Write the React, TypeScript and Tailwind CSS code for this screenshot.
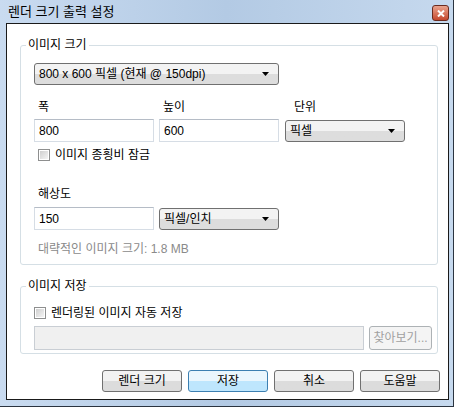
import React from "react";

const font = "font-['Liberation_Sans','Noto_Sans_CJK_KR',sans-serif]";

const Arrow = () => (
  <svg width="7" height="4" viewBox="0 0 7 4" className="shrink-0">
    <path d="M0 0h7L3.5 4z" fill="#000" />
  </svg>
);

const Combo = ({ label, w }: { label: string; w: string }) => (
  <div
    className={`${w} h-[22px] flex items-center justify-between pl-[4px] pr-[9px] rounded-[3px] border border-[#707070] bg-gradient-to-b from-[#f3f3f3] from-50% to-[#dddddd] to-50% text-[12px] text-black`}
  >
    <span>{label}</span>
    <Arrow />
  </div>
);

const Field = ({ value, w }: { value: string; w: string }) => (
  <div
    className={`${w} h-[23px] flex items-center px-[4px] border border-[#d6dde5] border-t-[#b5bcc6] bg-white text-[12px] text-black`}
  >
    {value}
  </div>
);

const Check = ({ label }: { label: string }) => (
  <div className="flex items-center gap-[5px] h-[14px] text-[12px] text-black">
    <div className="w-[12px] h-[12px] border border-[#8e8f8f] bg-white p-[1px]">
      <div className="w-full h-full bg-gradient-to-br from-[#cfcfcf] to-[#f4f4f4]" />
    </div>
    <span>{label}</span>
  </div>
);

const Group = ({ title, children, className }: { title: string; children: React.ReactNode; className?: string }) => (
  <div className={`relative border border-[#d5dfe5] rounded-[3px] ${className ?? ""}`}>
    <span className="absolute -top-[9px] left-[5px] bg-white px-[2px] text-[12px] leading-[16px] text-black">
      {title}
    </span>
    {children}
  </div>
);

const Btn = ({ label, primary }: { label: string; primary?: boolean }) => (
  <div
    className={
      primary
        ? "w-[80px] h-[22px] flex items-center justify-center rounded-[3px] border border-[#3c7fb1] bg-gradient-to-b from-[#eaf6fd] from-50% to-[#bee6fd] to-50% text-[12px] text-black"
        : "w-[80px] h-[22px] flex items-center justify-center rounded-[3px] border border-[#707070] bg-gradient-to-b from-[#f2f2f2] from-50% to-[#dcdcdc] to-50% text-[12px] text-black"
    }
  >
    {label}
  </div>
);

export default function App() {
  return (
    <div className={`w-[456px] h-[408px] bg-white overflow-hidden ${font}`}>
      <div className="w-[454px] h-[407px] flex flex-col border-r border-b border-[#2b3440] bg-gradient-to-r from-[#c9dbf0] via-[#b3cae4] to-[#c6d9ee]">
        <div className="h-[23px] flex items-center justify-between pl-[8px] pr-[4px]">
          <span className="text-[13px] text-black">렌더 크기 출력 설정</span>
          <div className="w-[17px] h-[16px] mt-[3px] flex items-center justify-center rounded-[3px] border border-[#6b2b1f] bg-gradient-to-b from-[#e9a38d] to-[#c4462c]">
            <svg width="8" height="7" viewBox="0 0 8 7">
              <path d="M1 0.5L7 6.5M7 0.5L1 6.5" stroke="#fff" strokeWidth="2" />
            </svg>
          </div>
        </div>
        <div className="ml-[6px] mr-[4px] h-[377px] border border-[#1a1a1a] bg-white pl-[13px] pr-[10px] pt-[21px] flex flex-col">
          <Group title="이미지 크기" className="pl-[13px] pt-[17px] pb-[7px]">
            <Combo label="800 x 600 픽셀 (현재 @ 150dpi)" w="w-[245px]" />
            <div className="flex gap-[5px] mt-[14px] h-[16px] text-[12px] leading-[16px] text-black">
              <span className="w-[120px] pl-[4px]">폭</span>
              <span className="w-[126px] pl-[4px]">높이</span>
              <span className="w-[120px] pl-[4px]">단위</span>
            </div>
            <div className="flex gap-[5px] mt-[4px] items-center">
              <Field value="800" w="w-[120px]" />
              <Field value="600" w="w-[120px]" />
              <div className="ml-[1px]">
                <Combo label="픽셀" w="w-[120px]" />
              </div>
            </div>
            <div className="mt-[6px] pl-[4px]">
              <Check label="이미지 종횡비 잠금" />
            </div>
            <div className="mt-[24px] h-[16px] pl-[4px] text-[12px] leading-[16px] text-black">해상도</div>
            <div className="flex gap-[5px] mt-[5px] items-center">
              <Field value="150" w="w-[120px]" />
              <Combo label="픽셀/인치" w="w-[120px]" />
            </div>
            <div className="mt-[11px] h-[16px] pl-[4px] text-[12px] leading-[16px] text-[#8a8a8a]">
              대략적인 이미지 크기: 1.8 MB
            </div>
          </Group>
          <Group title="이미지 저장" className="mt-[21px] pl-[13px] pt-[19px] pb-[3px]">
            <Check label="렌더링된 이미지 자동 저장" />
            <div className="flex gap-[5px] mt-[6px]">
              <div className="w-[330px] h-[24px] border border-[#c9ced4] bg-[#f0f0f0]" />
              <div className="w-[63px] h-[24px] flex items-center justify-center rounded-[3px] border border-[#adb2b5] bg-[#f4f4f4] text-[12px] text-[#a0a0a0]">
                찾아보기...
              </div>
            </div>
          </Group>
          <div className="flex justify-end gap-[6px] mt-[16px] -mr-[2px]">
            <Btn label="렌더 크기" />
            <Btn label="저장" primary />
            <Btn label="취소" />
            <Btn label="도움말" />
          </div>
        </div>
      </div>
    </div>
  );
}
